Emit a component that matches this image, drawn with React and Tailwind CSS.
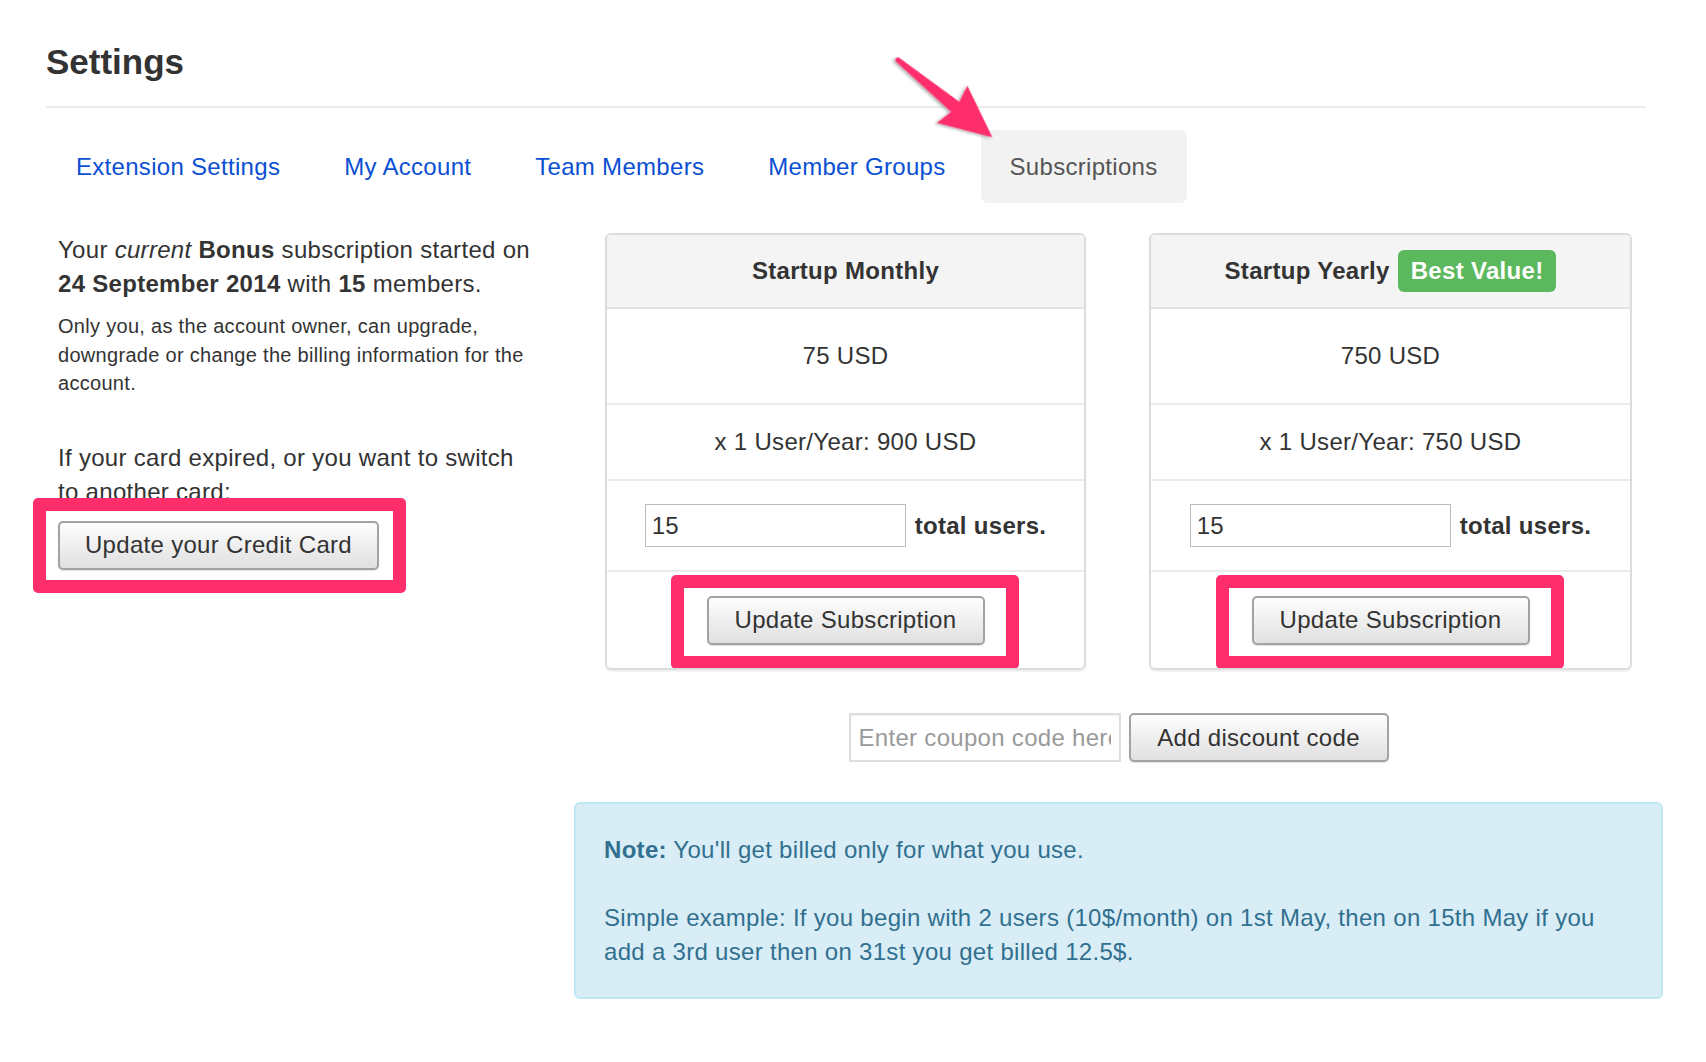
// Settings > Subscriptions page, with the pink annotation marks drawn on top.

const tabs = ['Extension Settings', 'My Account', 'Team Members', 'Member Groups'];

function GreyButton({ children, className = '' }) {
  return (
    <button
      className={`h-[49px] rounded-[5px] border-2 border-[#a3a3a3] bg-linear-to-b from-[#fefefe] to-[#e0e0e0] text-[24px] text-[#333] shadow-[0_1px_1px_rgba(0,0,0,0.12)] ${className}`}
    >
      {children}
    </button>
  );
}

function Marked({ children, box }) {
  return (
    <div className="relative">
      {children}
      <div className={`absolute pointer-events-none border-[13px] border-[#fe2e6d] rounded-[5px] ${box}`} />
    </div>
  );
}

function PlanCard({ title, badge, price, perUser, width }) {
  return (
    <div className={`${width} rounded-[6px] border-2 border-[#dcdcdc] overflow-hidden shadow-[0_2px_2px_rgba(0,0,0,0.06)]`}>
      <div className="h-[74px] border-b-2 border-[#e3e3e3] bg-[#f4f4f4] flex items-center justify-center gap-2">
        <span className="text-[24px] font-bold text-[#333]">{title}</span>
        {badge && (
          <span className="h-[42px] px-[13px] rounded-[6px] bg-[#5cb85c] text-white text-[24px] font-bold flex items-center">
            {badge}
          </span>
        )}
      </div>
      <div className="h-[96px] border-b-2 border-[#ebebeb] flex items-center justify-center text-[24px]">{price}</div>
      <div className="h-[76px] border-b-2 border-[#ebebeb] flex items-center justify-center text-[24px]">{perUser}</div>
      <div className="h-[91px] border-b-2 border-[#ebebeb] flex items-center justify-center gap-[9px]">
        <input
          defaultValue="15"
          className="w-[261px] h-[43px] border border-[#bdbdbd] px-[6px] text-[24px] text-[#333] outline-none"
        />
        <span className="text-[24px] font-bold">total users.</span>
      </div>
      <div className="h-[96px] flex items-center justify-center">
        <Marked box="-left-[36px] -right-[34px] -top-[21px] -bottom-[24px]">
          <GreyButton className="w-[278px]">Update Subscription</GreyButton>
        </Marked>
      </div>
    </div>
  );
}

export default function App() {
  return (
    <div className="relative w-[1706px] h-[1062px] bg-white text-[#333] tracking-[0.3px] font-['Liberation_Sans',Arial,sans-serif]">
      <div className="pl-[46px]">
        <h1 className="pt-[44px] text-[35px] font-bold leading-none tracking-normal text-[#333]">Settings</h1>
        <div className="mt-[27px] w-[1600px] h-[2px] bg-[#ececec]" />
        <nav className="mt-[22px] ml-[1px] flex gap-[6px]">
          {tabs.map(t => (
            <a key={t} className="h-[73px] px-[29px] flex items-center text-[24px] text-[#0b4fd3]">{t}</a>
          ))}
          <a className="h-[73px] px-[29px] flex items-center text-[24px] text-[#555] bg-[#f2f2f2] rounded-[7px]">
            Subscriptions
          </a>
        </nav>
      </div>

      <div className="mt-[30px] pl-[58px] flex">
        <div className="w-[516px]">
          <p className="text-[24px] leading-[34px] whitespace-nowrap">
            Your <i>current</i> <b>Bonus</b> subscription started on
            <br />
            <b>24 September 2014</b> with <b>15</b> members.
          </p>
          <p className="mt-[11px] text-[20px] leading-[28.5px] whitespace-nowrap">
            Only you, as the account owner, can upgrade,
            <br />
            downgrade or change the billing information for the
            <br />
            account.
          </p>
          <p className="mt-[43px] text-[24px] leading-[34px] whitespace-nowrap">
            If your card expired, or you want to switch
            <br />
            to another card:
          </p>
          <div className="mt-[12px] flex">
            <Marked box="-left-[25px] -right-[27px] -top-[23px] -bottom-[23px]">
              <GreyButton className="w-[321px]">Update your Credit Card</GreyButton>
            </Marked>
          </div>
        </div>

        <div className="w-[1089px]">
          <div className="pl-[31px] flex gap-[63px]">
            <PlanCard width="w-[481px]" title="Startup Monthly" price="75 USD" perUser="x 1 User/Year: 900 USD" />
            <PlanCard width="w-[483px]" title="Startup Yearly" badge="Best Value!" price="750 USD" perUser="x 1 User/Year: 750 USD" />
          </div>

          <div className="mt-[43px] flex justify-center items-start gap-[8px]">
            <input
              placeholder="Enter coupon code here"
              className="w-[272px] h-[49px] border-2 border-[#dedede] px-[8px] text-[24px] text-[#333] placeholder:text-[#9a9a9a] outline-none shadow-[inset_0_1px_2px_rgba(0,0,0,0.06)]"
            />
            <GreyButton className="w-[260px] h-[48px]">Add discount code</GreyButton>
          </div>

          <div className="mt-[40px] rounded-[6px] border-2 border-[#bce8f1] bg-[#d9edf7] text-[#31708f] pt-[29px] pb-[28px] pl-[28px] text-[24px] leading-[34px]">
            <p>
              <b>Note:</b> You'll get billed only for what you use.
            </p>
            <p className="mt-[34px] whitespace-nowrap">
              Simple example: If you begin with 2 users (10$/month) on 1st May, then on 15th May if you
              <br />
              add a 3rd user then on 31st you get billed 12.5$.
            </p>
          </div>
        </div>
      </div>

      {/* annotation arrow pointing at the Subscriptions tab */}
      <svg className="absolute left-0 top-0 pointer-events-none" width="1706" height="200">
        <defs>
          <filter id="arrowShadow" x="-20%" y="-20%" width="140%" height="140%">
            <feDropShadow dx="-1" dy="2" stdDeviation="1.5" floodColor="#000" floodOpacity="0.35" />
          </filter>
        </defs>
        <g transform="translate(898 60) rotate(39.3)" filter="url(#arrowShadow)">
          <path d="M0 -2.5 L74 -6.5 L70 -24 L122 0 L70 24 L74 6.5 L0 2.5 A2.5 2.5 0 0 1 0 -2.5 Z" fill="#fe2e6d" />
        </g>
      </svg>
    </div>
  );
}
